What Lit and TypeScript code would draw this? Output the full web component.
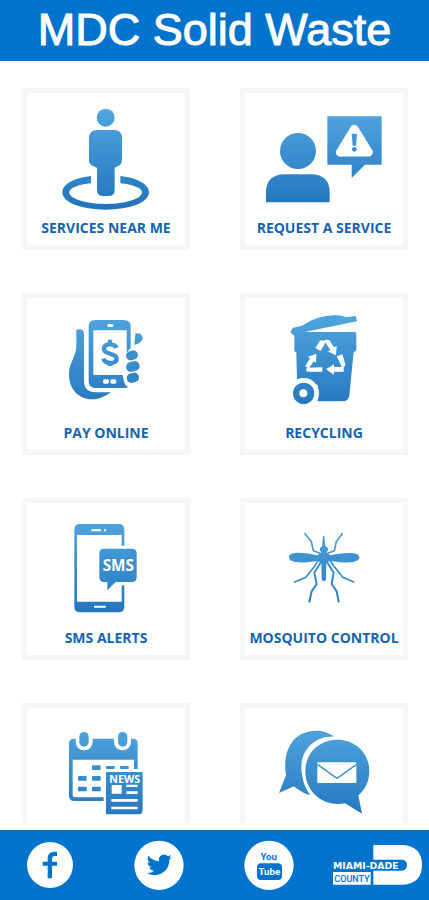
import { LitElement, html, svg, css, SVGTemplateResult } from "lit";
import { customElement } from "lit/decorators.js";

interface Tile {
  id: string;
  label: string;
  name: string;
  art: (fill: string) => SVGTemplateResult;
}

const personPin = (f: string) => svg`
  <g fill=${f}>
    <circle cx="272" cy="113" r="27"/>
    <path d="M248 150h48q25 0 25 25v66q0 16-22 22v66q0 19-19 19h-15q-19 0-19-19v-66q-24-6-24-22v-66q0-25 26-25z"/>
    <path d="M228 288v22c-38 4-65 14-65 27 0 20 50 35 109 35s109-15 109-35c0-13-27-23-65-27v-22c53 6 86 25 86 49 0 30-56 52-130 52s-130-22-130-52c0-24 33-43 86-49z"/>
  </g>`;

const requestService = (f: string) => svg`
  <g fill=${f}>
    <circle cx="189" cy="213" r="54"/>
    <path d="M93 367v-28q0-56 56-56h79q56 0 56 56v28z"/>
    <path d="M277 109h163v145h-50l-40 40v-40h-73z"/>
    <path d="M358 147 315 217h86z" fill="#fff" stroke="#fff" stroke-width="25" stroke-linejoin="round"/>
    <path d="M350 161h16l-3 36h-10z"/>
    <circle cx="358" cy="208" r="7"/>
  </g>`;

const payOnline = (f: string) => svg`
  <g fill=${f}>
    <path d="M184 134q22-5 23 12v141q0 33 35 35h46c-20 13-34 21-57 21-42 0-69-32-69-75 0-38 22-50 22-88z"/>
    <path fill-rule="evenodd" d="M241 105h86q20 0 20 20v63l-12 15v-67h-100v134h88l4 20q2 10 12 15-2 4-12 4h-86q-20 0-20-20V125q0-20 20-20z"/>
    <path d="M361 145q20-3 22 15-1 14-25 20z"/>
    <rect x="333" y="197" width="36" height="28" rx="14" transform="rotate(-14 351 211)"/>
    <rect x="333" y="230" width="41" height="29" rx="14" transform="rotate(-14 353 244)"/>
    <rect x="335" y="264" width="37" height="29" rx="14" transform="rotate(-14 353 278)"/>
    <rect x="277" y="117" width="18" height="9" rx="4" fill="#fff"/>
    <rect x="264" y="283" width="18" height="13" rx="5" fill="#fff"/>
    <rect x="286" y="283" width="18" height="13" rx="5" fill="#fff"/>
  </g>
  <path d="M305 188c-5-10-34-16-38 1-4 21 38 13 38 33 0 16-35 16-40-1M285 164v15M285 230v13" fill="none" stroke=${f} stroke-width="13"/>`;

const recycling = (f: string) => svg`
  <g fill=${f}>
    <path d="M167 143q0-15 18-17 14-2 25-9 35-24 88-26 24-1 34 6l30-4 4 16-146 30-10 2h150q4 0 4 8v46q0 5-8 6l-13 130q-2 18-20 18h-75V300l-62-15-2-83-6-3v-47z"/>
    <circle cx="206" cy="325" r="46" fill="#fff"/>
    <path d="M140 270h46v14l-30 30h-16z" fill="#fff"/>
    <circle cx="206" cy="325" r="32"/>
    <circle cx="205" cy="325" r="12" fill="#fff"/>
  </g>
  <g fill="#fff">
    <path d="m256 166 18 1-17 31-16-9z"/>
    <path d="m273 164 10 1 14 22 8-4-2 28-25-12 8-4-18-28z"/>
    <path d="m305 214 17-6 9 30q0 9-9 10z"/>
    <path d="M326 245v15h-29v9l-24-16 24-15v8z"/>
    <path d="M262 247v13h-43q-10-2-3-12z"/>
    <path d="m211 243 14-23-7-4 26-10-1 27-7-4-15 23z"/>
  </g>`;

const smsAlerts = (f: string) => svg`
  <path fill=${f} fill-rule="evenodd" d="M195 102h116q17 0 17 17v231q0 17-17 17H195q-17 0-17-17V119q0-17 17-17zm-9 33v200h134V135z"/>
  <rect x="316" y="167" width="16" height="119" fill="#fff"/>
  <path fill="#fff" d="M229 118h29v6h-29zM267 118h6v6h-6zM237 347h35v6h-35z"/>
  <path fill=${f} d="M267 176h84q14 0 14 14v72q0 14-14 14h-49l-25 25v-25h-10q-14 0-14-14v-72q0-14 14-14z"/>
  <text x="310" y="243" class="art-text sms">SMS</text>`;

const mosquito = (f: string) => svg`
  <g fill=${f}>
    <path d="m264 138 4 0 3 31q10 4 8 12l-4 6 10 9c30-6 88-14 88 6 0 22-58 16-88 10l-11 7-1 50q-7 8-13 0l-1-50-11-7c-30 6-86 12-86-10s56-12 86-6l11-9-5-6q-1-8 7-12z"/>
  </g>
  <g fill="none" stroke=${f} stroke-width="5" stroke-linejoin="round" stroke-linecap="round">
    <path d="m255 190-20-8-6-27-19-24M278 190l20-8 6-27 18-24"/>
    <path d="m250 210-10 17-27 35-34 14M284 210l12 17 27 35 33 14"/>
    <path d="m258 216-20 32 7 34-15 22-7 31M276 216l20 32-6 34 15 22 6 31" stroke-width="6"/>
  </g>`;

const newsCalendar = (f: string) => svg`
  <path fill=${f} fill-rule="evenodd" d="M178 131h175q15 0 15 15v76h-11v-28H173v106q0 7 7 7h86v11h-88q-16 0-16-16V146q0-15 16-15z"/>
  <rect x="182" y="99" width="51" height="67" rx="25" fill="#fff"/>
  <rect x="297" y="99" width="51" height="67" rx="25" fill="#fff"/>
  <g fill=${f}>
    <rect x="193" y="111" width="28" height="44" rx="14"/>
    <rect x="309" y="111" width="28" height="44" rx="14"/>
    <rect x="231" y="211" width="26" height="14" rx="2"/>
    <rect x="273" y="213" width="26" height="9" rx="2"/>
    <rect x="315" y="213" width="26" height="9" rx="2"/>
    <rect x="189" y="243" width="26" height="14" rx="2"/>
    <rect x="231" y="243" width="26" height="14" rx="2"/>
    <rect x="189" y="275" width="26" height="14" rx="2"/>
    <rect x="231" y="275" width="26" height="14" rx="2"/>
    <path d="M273 231h110v113q0 14-14 14h-96z"/>
  </g>
  <path fill="#fff" d="M290 270h30v26h-30zM334 269h34v7h-34zM334 289h34v8h-34zM289 312h79v8h-79zM289 335h79v8h-79z"/>
  <text x="329" y="263" class="art-text news">NEWS</text>`;

const messages = (f: string) => svg`
  <path fill=${f} d="M298 125c-62-3-112 47-96 119 4 23 11 41 24 56-18-3-36-15-49-26l-45 20 21-53c-10-64 12-133 92-134 22 0 40 8 53 18z"/>
  <circle cx="307" cy="229" r="104" fill="#fff"/>
  <path fill=${f} d="M307 134c54 0 96 40 96 94 0 30-12 55-33 73l11 55-51-31c-66 12-119-34-119-97 0-54 42-94 96-94z"/>
  <path fill="#fff" d="M247 202h117v62H247z"/>
  <path d="m247 208 59 42 59-42" fill="none" stroke=${f} stroke-width="4"/>`;

const TILES: Tile[] = [
  { id: "near", label: "SERVICES NEAR ME", name: "Services near me", art: personPin },
  { id: "request", label: "REQUEST A SERVICE", name: "Request a service", art: requestService },
  { id: "pay", label: "PAY ONLINE", name: "Pay online", art: payOnline },
  { id: "recycling", label: "RECYCLING", name: "Recycling", art: recycling },
  { id: "sms", label: "SMS ALERTS", name: "SMS alerts", art: smsAlerts },
  { id: "mosquito", label: "MOSQUITO CONTROL", name: "Mosquito control", art: mosquito },
  { id: "news", label: "", name: "News", art: newsCalendar },
  { id: "messages", label: "", name: "Messages", art: messages },
];

@customElement("app-root")
export class AppRoot extends LitElement {
  static styles = css`
    :host {
      display: flex;
      flex-direction: column;
      height: 100vh;
      background: #fff;
      font-family: "Open Sans", "Noto Sans", sans-serif;
    }
    .header {
      flex: none;
      background: #0074cc;
      color: #fff;
      text-align: center;
      padding: 4px 0 5px;
    }
    .title {
      margin: 0;
      font: 400 45px/52px "Liberation Sans", Arial, sans-serif;
      -webkit-text-stroke: 1px #fff;
    }
    .tiles {
      flex: 1;
      min-height: 0;
      overflow-y: auto;
      scrollbar-width: none;
      display: grid;
      grid-template-columns: 1fr 1fr;
      grid-auto-rows: max-content;
      gap: 43px 50px;
      padding: 27px 21px 0 22px;
      margin-bottom: 7px;
    }
    .tile {
      box-sizing: border-box;
      min-height: 162px;
      border: 5px solid #f6f6f6;
      display: flex;
      flex-direction: column;
      align-items: center;
      text-decoration: none;
      color: #1464b0;
    }
    .art {
      display: block;
      width: 158px;
      height: 125px;
    }
    .label {
      font-size: 14px;
      line-height: 20px;
      font-weight: 700;
      white-space: nowrap;
    }
    .art-text {
      fill: #fff;
      text-anchor: middle;
      font-family: "Open Sans", sans-serif;
      font-weight: 700;
    }
    .sms {
      font-size: 46px;
    }
    .news {
      font-size: 32px;
    }
    .footer {
      flex: none;
      display: flex;
      justify-content: space-between;
      align-items: center;
      padding: 10px 6px 10px 5px;
      background: #0074cc;
    }
    .social,
    .social-art {
      display: block;
      width: 90px;
      height: 50px;
    }
    .brand {
      fill: #0074cc;
    }
    .you {
      fill: #0074cc;
      text-anchor: middle;
      font: 700 29px Roboto, "Liberation Sans", sans-serif;
    }
    .tube {
      fill: #fff;
    }
    .miami {
      fill: #fff;
      font: 700 28px "DejaVu Sans", sans-serif;
    }
    .county {
      fill: #0074cc;
      text-anchor: middle;
      font: 500 27px Roboto, "Liberation Sans", sans-serif;
    }
  `;

  private renderTile(t: Tile, i: number) {
    const gid = `shade-${t.id}`;
    return html`
      <a class="tile" href="#${t.id}" aria-label=${t.name}>
        <svg class="art" viewBox="${i % 2 ? 30 : 36} 39 474 375" aria-hidden="true">
          <defs>
            <linearGradient id=${gid} gradientUnits="userSpaceOnUse" x1="0" y1="90" x2="0" y2="380">
              <stop offset="0" stop-color="#51a5de" />
              <stop offset="1" stop-color="#2275bd" />
            </linearGradient>
          </defs>
          ${t.art(`url(#${gid})`)}
        </svg>
        ${t.label ? html`<span class="label">${t.label}</span>` : null}
      </a>
    `;
  }

  render() {
    return html`
      <header class="header"><h1 class="title">MDC Solid Waste</h1></header>
      <main class="tiles">${TILES.map((t, i) => this.renderTile(t, i))}</main>
      <footer class="footer">
        <a class="social" href="#facebook" aria-label="Facebook">
          <svg class="social-art" viewBox="15 60 270 150" aria-hidden="true">
            <circle cx="150" cy="135" r="69" fill="#fff" />
            <path class="brand" d="M143 175v-38h-15v-12h15v-9q0-21 20-21h8v13h-7q-8 0-8 10v7h15v12h-15v38z" />
          </svg>
        </a>
        <a class="social" href="#twitter" aria-label="Twitter">
          <svg class="social-art" viewBox="345 60 270 150" aria-hidden="true">
            <circle cx="480" cy="136" r="74" fill="#fff" />
            <path class="brand" transform="translate(443 97) scale(3.15)"
              d="M23.953 4.57a10 10 0 01-2.825.775 4.958 4.958 0 002.163-2.723c-.951.555-2.005.959-3.127 1.184a4.92 4.92 0 00-8.384 4.482C7.69 8.095 4.067 6.13 1.64 3.162a4.822 4.822 0 00-.666 2.475c0 1.71.87 3.213 2.188 4.096a4.904 4.904 0 01-2.228-.616v.06a4.923 4.923 0 003.946 4.827 4.996 4.996 0 01-2.212.085 4.936 4.936 0 004.604 3.417 9.867 9.867 0 01-6.102 2.105c-.39 0-.779-.023-1.17-.067a13.995 13.995 0 007.557 2.209c9.053 0 13.998-7.496 13.998-13.985 0-.21 0-.42-.015-.63A9.935 9.935 0 0024 4.59z" />
          </svg>
        </a>
        <a class="social" href="#youtube" aria-label="YouTube">
          <svg class="social-art" viewBox="27 60 270 150" aria-hidden="true">
            <circle cx="162" cy="136" r="74" fill="#fff" />
            <text class="you" x="161" y="121">You</text>
            <rect class="brand" x="126" y="130" width="75" height="50" rx="12" />
            <text class="you tube" x="163" y="166">Tube</text>
          </svg>
        </a>
        <a class="social" href="#county" aria-label="Miami-Dade County">
          <svg class="social-art" viewBox="354 60 270 150" aria-hidden="true">
            <path fill="#fff" d="M475 75h88q58 4 58 60t-58 59h-88z" />
            <path class="brand" d="M470 119h92q14 2 14 16t-14 17h-92z" />
            <path fill="#fff" d="M354 156h113v38H354z" />
            <text class="miami" x="354" y="146">MIAMI-DADE</text>
            <text class="county" x="411" y="185">COUNTY</text>
          </svg>
        </a>
      </footer>
    `;
  }
}
